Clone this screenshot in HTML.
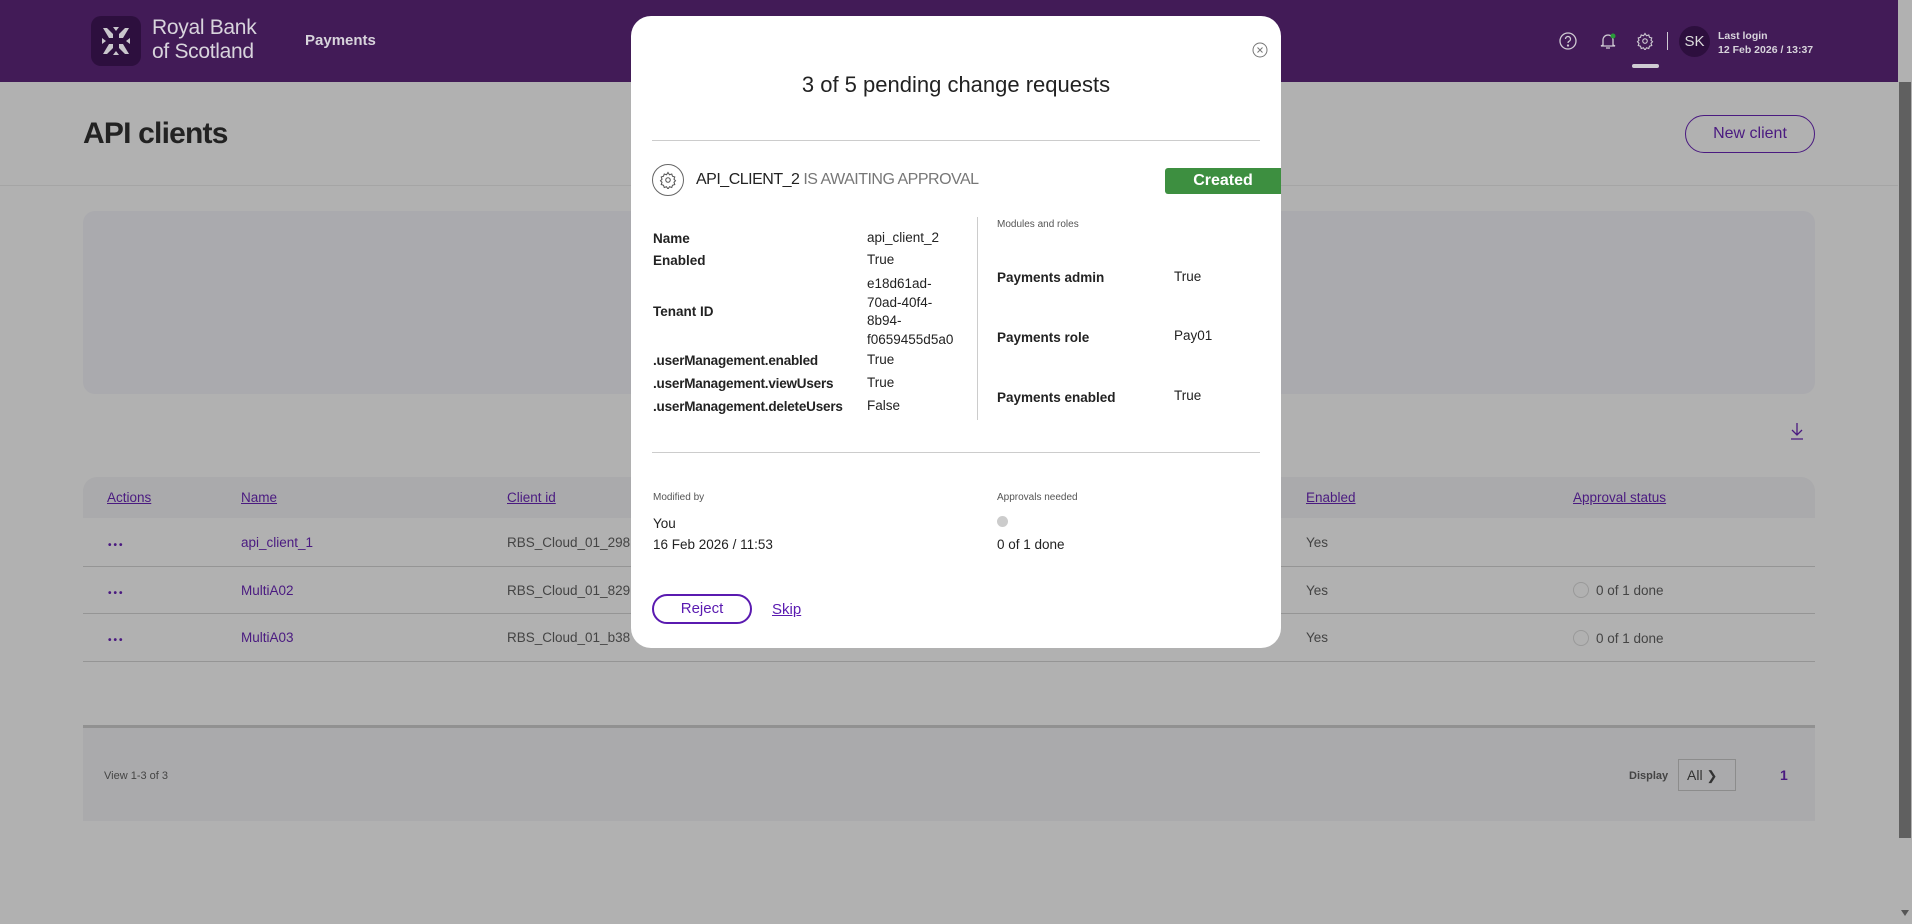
<!DOCTYPE html>
<html><head><meta charset="utf-8"><style>
*{box-sizing:border-box;margin:0;padding:0}
body{width:1912px;height:924px;overflow:hidden;background:#b1b1b1;font-family:"Liberation Sans",sans-serif;position:relative;color:#333}
.a{position:absolute;white-space:nowrap}
.hdr{position:absolute;left:0;top:0;width:1898px;height:82px;background:#421b57}
.lnk{color:#4a1a80;text-decoration:underline}
.m{position:absolute;left:631px;top:16px;width:650px;height:632px;background:#fff;border-radius:20px}
.m .a{font-size:13.5px;color:#222}
.b{font-weight:bold}
.t{font-size:13.5px}
</style></head><body>
<div class="hdr">
  <div class="a" style="left:91px;top:16px;width:50px;height:50px;border-radius:10px;background:#2d0f3e"></div>
  <svg class="a" style="left:99px;top:24px" width="34" height="34" viewBox="0 0 34 34" fill="#c9c6cc">
    <path d="M4 4h4l6 6v4h-4z M30 4h-4l-6 6v4h4z M4 30h4l6-6v-4h-4z M30 30h-4l-6-6v-4h4z M14 3h6l-3 4z M14 31h6l-3-4z M3 14v6l4-3z M31 14v6l-4-3z"/>
  </svg>
  <div class="a" style="left:152px;top:16px;font-size:21px;line-height:24px;color:#d8d4dc;letter-spacing:-0.3px">Royal Bank<br>of Scotland</div>
  <div class="a b" style="left:305px;top:32px;font-size:15px;color:#d8d4dc">Payments</div>
  <svg class="a" style="left:1559px;top:32px" width="18" height="18" viewBox="0 0 18 18" fill="none" stroke="#cfcbd3" stroke-width="1.3"><circle cx="9" cy="9" r="8"/><path d="M6.5 7a2.5 2.5 0 1 1 3.5 2.3c-.8.4-1 .9-1 1.7"/><circle cx="9" cy="13.5" r=".5" fill="#cfcbd3"/></svg>
  <svg class="a" style="left:1598px;top:31px" width="20" height="20" viewBox="0 0 20 20" fill="none" stroke="#cfcbd3" stroke-width="1.3"><path d="M5 14V9a5 5 0 0 1 10 0v5l2 1H3z M8 17h4"/><circle cx="15" cy="5" r="2.5" fill="#2a9a3a" stroke="none"/></svg>
  <svg class="a" style="left:1636px;top:32px" width="18" height="18" viewBox="0 0 24 24" fill="none" stroke="#cfcbd3" stroke-width="1.5"><circle cx="12" cy="12" r="3"/><path d="M12 2l2 3 3-1 1 3 3 1-1 3 2 2-2 2 1 3-3 1-1 3-3-1-2 3-2-3-3 1-1-3-3-1 1-3-2-2 2-2-1-3 3-1 1-3 3 1z"/></svg>
  <div class="a" style="left:1632px;top:64px;width:27px;height:4px;border-radius:2px;background:#cfcbd3"></div>
  <div class="a" style="left:1667px;top:32px;width:1px;height:18px;background:#cfcbd3"></div>
  <div class="a" style="left:1679px;top:26px;width:31px;height:31px;border-radius:50%;background:#2d0f3e;color:#ddd;font-size:15px;text-align:center;line-height:31px">SK</div>
  <div class="a b" style="left:1718px;top:29px;font-size:10.5px;color:#d8d4dc;line-height:14px">Last login<br>12 Feb 2026 / 13:37</div>
</div>
<div class="a" style="left:1898px;top:0;width:14px;height:924px;background:#b1b1b1"></div>
<div class="a" style="left:1899px;top:82px;width:12px;height:756px;background:#606060"></div>
<div class="a" style="left:1901px;top:910px;width:0;height:0;border:4px solid transparent;border-top:6px solid #555"></div>

<div class="a b" style="left:83px;top:117px;font-size:30px;color:#222;letter-spacing:-0.8px">API clients</div>
<div class="a" style="left:1685px;top:115px;width:130px;height:38px;border:1.5px solid #4a1a80;border-radius:19px;color:#4a1a80;font-size:16px;text-align:center;line-height:35px">New client</div>
<div class="a" style="left:0;top:185px;width:1898px;height:1px;background:#a5a5a5"></div>
<div class="a" style="left:83px;top:211px;width:1732px;height:183px;background:#aaaaae;border-radius:12px"></div>
<svg class="a" style="left:1789px;top:422px" width="16" height="18" viewBox="0 0 16 18" fill="none" stroke="#4a1a80" stroke-width="1.3"><path d="M8 1v12M3 8l5 5 5-5M2 17h12"/></svg>

<div class="a" style="left:83px;top:477px;width:1732px;height:41px;background:#aaaaac;border-radius:14px 14px 0 0"></div>
<div class="a lnk t" style="left:107px;top:490px">Actions</div>
<div class="a lnk t" style="left:241px;top:490px">Name</div>
<div class="a lnk t" style="left:507px;top:490px">Client id</div>
<div class="a lnk t" style="left:1306px;top:490px">Enabled</div>
<div class="a lnk t" style="left:1573px;top:490px">Approval status</div>
<div class="a" style="left:83px;top:566px;width:1732px;height:1px;background:#959595"></div>
<div class="a" style="left:83px;top:613px;width:1732px;height:1px;background:#959595"></div>
<div class="a" style="left:83px;top:661px;width:1732px;height:1px;background:#959595"></div>
<div class="a b" style="left:108px;top:540px;font-size:10px;color:#4a1a80;letter-spacing:2px">•••</div>
<div class="a b" style="left:108px;top:588px;font-size:10px;color:#4a1a80;letter-spacing:2px">•••</div>
<div class="a b" style="left:108px;top:635px;font-size:10px;color:#4a1a80;letter-spacing:2px">•••</div>
<div class="a t" style="left:241px;top:535px;color:#4a1a80">api_client_1</div>
<div class="a t" style="left:241px;top:583px;color:#4a1a80">MultiA02</div>
<div class="a t" style="left:241px;top:630px;color:#4a1a80">MultiA03</div>
<div class="a t" style="left:507px;top:535px;color:#444">RBS_Cloud_01_298</div>
<div class="a t" style="left:507px;top:583px;color:#444">RBS_Cloud_01_829</div>
<div class="a t" style="left:507px;top:630px;color:#444">RBS_Cloud_01_b38</div>
<div class="a t" style="left:1306px;top:535px;color:#444">Yes</div>
<div class="a t" style="left:1306px;top:583px;color:#444">Yes</div>
<div class="a t" style="left:1306px;top:630px;color:#444">Yes</div>
<div class="a" style="left:1573px;top:582px;width:16px;height:16px;border:1.5px solid #999;border-radius:50%"></div>
<div class="a t" style="left:1596px;top:583px;color:#444">0 of 1 done</div>
<div class="a" style="left:1573px;top:630px;width:16px;height:16px;border:1.5px solid #999;border-radius:50%"></div>
<div class="a t" style="left:1596px;top:631px;color:#444">0 of 1 done</div>

<div class="a" style="left:83px;top:725px;width:1732px;height:96px;background:#aaaaac;border-top:3px solid #919191"></div>
<div class="a" style="left:104px;top:770px;font-size:11px;color:#444">View 1-3 of 3</div>
<div class="a b" style="left:1629px;top:770px;font-size:11px;color:#444">Display</div>
<div class="a" style="left:1678px;top:759px;width:58px;height:32px;border:1px solid #8c8c8c;font-size:14px;color:#333;padding:7px 0 0 8px">All <span style="font-size:13px">&#10095;</span></div>
<div class="a b" style="left:1780px;top:767px;font-size:14px;color:#4a1a80">1</div>

<div class="m">
  <svg class="a" style="left:621px;top:26px" width="16" height="16" viewBox="0 0 16 16" fill="none" stroke="#777" stroke-width="1"><circle cx="8" cy="8" r="7"/><path d="M5.5 5.5l5 5M10.5 5.5l-5 5"/></svg>
  <div class="a" style="left:0;width:650px;top:56px;text-align:center;font-size:22px!important;color:#222">3 of 5 pending change requests</div>
  <div class="a" style="left:21px;top:124px;width:608px;height:1px;background:#ccc"></div>
  <div class="a" style="left:21px;top:148px;width:32px;height:32px;border:1px solid #666;border-radius:50%"></div>
  <svg class="a" style="left:28px;top:155px" width="18" height="18" viewBox="0 0 24 24" fill="none" stroke="#555" stroke-width="1.4"><circle cx="12" cy="12" r="3"/><path d="M12 2l2 3 3-1 1 3 3 1-1 3 2 2-2 2 1 3-3 1-1 3-3-1-2 3-2-3-3 1-1-3-3-1 1-3-2-2 2-2-1-3 3-1 1-3 3 1z"/></svg>
  <div class="a" style="left:65px;top:155px;font-size:16px!important;color:#222;letter-spacing:-0.5px">API_CLIENT_2 <span style="color:#777">IS AWAITING APPROVAL</span></div>
  <div class="a b" style="left:534px;top:152px;width:116px;height:26px;background:#3d8f40;color:#fff!important;font-size:16px!important;text-align:center;line-height:26px;border-radius:3px 0 0 3px">Created</div>
  <div class="a b" style="left:22px;top:215px">Name</div>
  <div class="a b" style="left:22px;top:237px">Enabled</div>
  <div class="a b" style="left:22px;top:288px">Tenant ID</div>
  <div class="a b" style="left:22px;top:337px;letter-spacing:-0.2px">.userManagement.enabled</div>
  <div class="a b" style="left:22px;top:360px;letter-spacing:-0.2px">.userManagement.viewUsers</div>
  <div class="a b" style="left:22px;top:383px;letter-spacing:-0.2px">.userManagement.deleteUsers</div>
  <div class="a" style="left:236px;top:214px">api_client_2</div>
  <div class="a" style="left:236px;top:236px">True</div>
  <div class="a" style="left:236px;top:259px;line-height:18.5px">e18d61ad-<br>70ad-40f4-<br>8b94-<br>f0659455d5a0</div>
  <div class="a" style="left:236px;top:336px">True</div>
  <div class="a" style="left:236px;top:359px">True</div>
  <div class="a" style="left:236px;top:382px">False</div>
  <div class="a" style="left:346px;top:201px;width:1px;height:203px;background:#ccc"></div>
  <div class="a" style="left:366px;top:203px;font-size:10px!important;color:#555!important">Modules and roles</div>
  <div class="a b" style="left:366px;top:254px">Payments admin</div>
  <div class="a b" style="left:366px;top:314px">Payments role</div>
  <div class="a b" style="left:366px;top:374px">Payments enabled</div>
  <div class="a" style="left:543px;top:253px">True</div>
  <div class="a" style="left:543px;top:312px">Pay01</div>
  <div class="a" style="left:543px;top:372px">True</div>
  <div class="a" style="left:21px;top:436px;width:608px;height:1px;background:#ccc"></div>
  <div class="a" style="left:22px;top:476px;font-size:10px!important;color:#555!important">Modified by</div>
  <div class="a" style="left:22px;top:500px">You</div>
  <div class="a" style="left:22px;top:521px">16 Feb 2026 / 11:53</div>
  <div class="a" style="left:366px;top:476px;font-size:10px!important;color:#555!important">Approvals needed</div>
  <div class="a" style="left:366px;top:500px;width:11px;height:11px;border-radius:50%;background:#ccc"></div>
  <div class="a" style="left:366px;top:521px">0 of 1 done</div>
  <div class="a" style="left:21px;top:578px;width:100px;height:30px;border:2px solid #5a1ab0;border-radius:15px;color:#5a1ab0!important;font-size:15px!important;text-align:center;line-height:26px">Reject</div>
  <div class="a" style="left:141px;top:585px;font-size:15px!important;color:#5a1ab0!important;text-decoration:underline">Skip</div>
</div>
</body></html>
